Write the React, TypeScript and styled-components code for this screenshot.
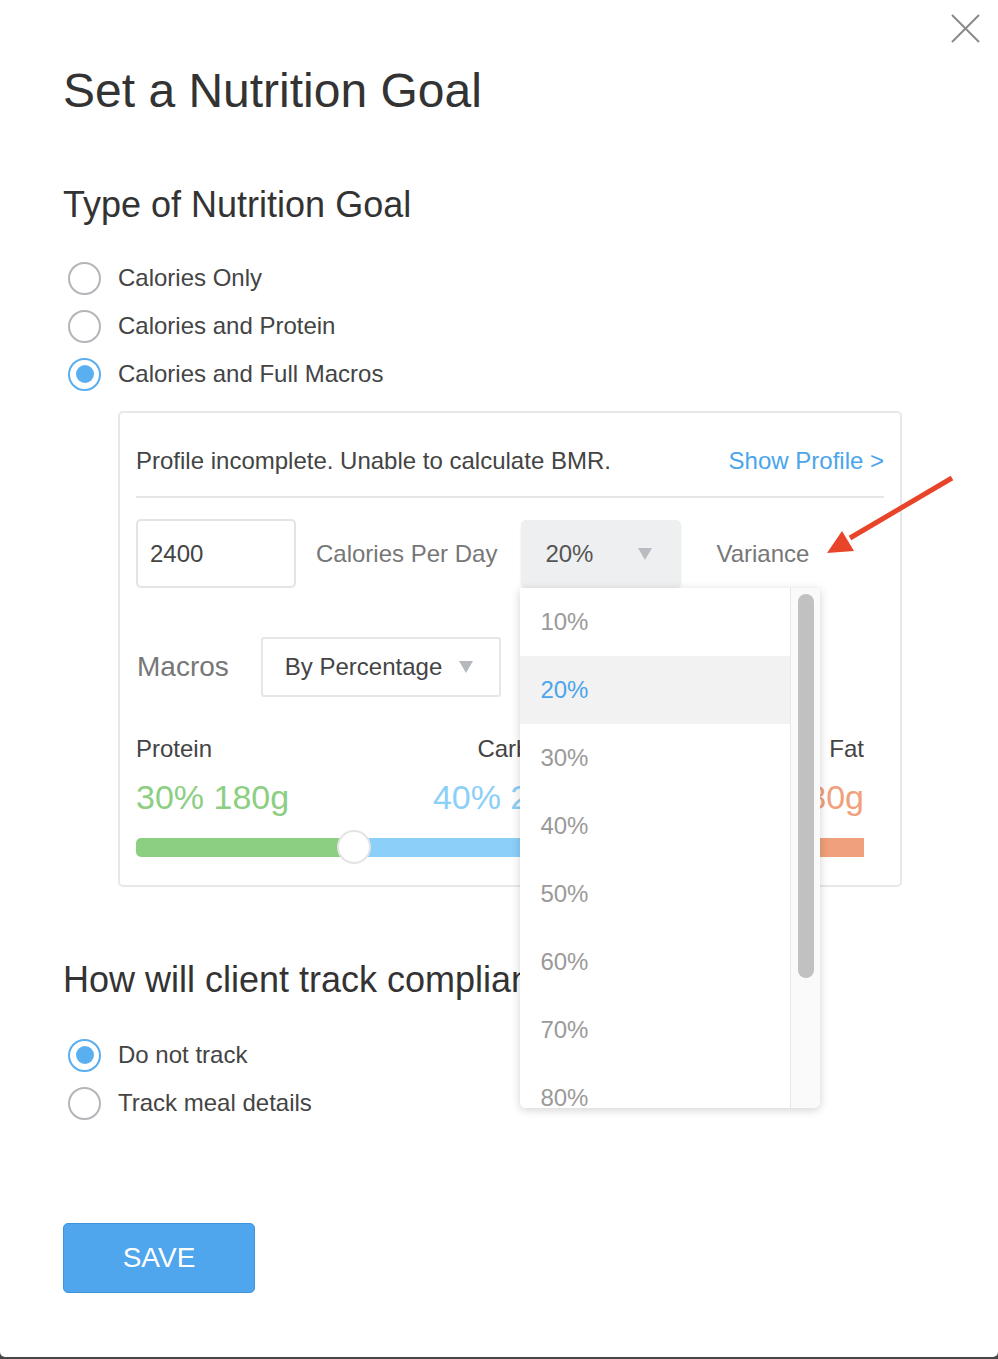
import React from "react";
import styled, { createGlobalStyle } from "styled-components";

const Global = createGlobalStyle`
  html, body { margin: 0; padding: 0; background: #474747; }
  * { box-sizing: border-box; }
  body { font-family: "Liberation Sans", Arial, sans-serif; }
`;

const Modal = styled.div`
  position: relative;
  width: 998px;
  height: 1357px;
  background: #fff;
  border-radius: 0 0 5px 5px;
  padding: 63px 0 0 63px;
  color: #333;
`;

const CloseButton = styled.button`
  position: absolute;
  top: 13px;
  right: 17px;
  width: 31px;
  height: 31px;
  padding: 0;
  border: 0;
  background: transparent;
  cursor: pointer;
`;

const Title = styled.h1`
  margin: 0;
  font-size: 48px;
  line-height: 56px;
  font-weight: 400;
  color: #333;
`;

const SectionTitle = styled.h2<{ $top: number }>`
  margin: ${(p) => p.$top}px 0 0;
  font-size: 36px;
  line-height: 44px;
  font-weight: 400;
  color: #333;
`;

const RadioGroup = styled.div<{ $top: number }>`
  display: flex;
  flex-direction: column;
  margin-top: ${(p) => p.$top}px;
`;

const RadioRow = styled.label`
  display: flex;
  align-items: center;
  height: 48px;
  padding-left: 5px;
  font-size: 24px;
  color: #444;
`;

const RadioCircle = styled.span<{ $checked?: boolean }>`
  width: 33px;
  height: 33px;
  border-radius: 50%;
  border: 2px solid ${(p) => (p.$checked ? "#5aaeef" : "#b4b5b9")};
  display: flex;
  align-items: center;
  justify-content: center;
  margin-right: 17px;
  flex-shrink: 0;
  &::after {
    content: "";
    display: ${(p) => (p.$checked ? "block" : "none")};
    width: 18px;
    height: 18px;
    border-radius: 50%;
    background: #59aff0;
  }
`;

const Panel = styled.div`
  margin: 13px 96px 0 55px;
  border: 2px solid #e8e8e8;
  border-radius: 5px;
  padding: 0 16px 21px;
`;

const PanelHeader = styled.div`
  display: flex;
  justify-content: space-between;
  align-items: center;
  padding: 34px 0 21px;
  border-bottom: 2px solid #e6e6e6;
  font-size: 24px;
  line-height: 28px;
  color: #444;
`;

const LinkText = styled.a`
  color: #4aa5ec;
  text-decoration: none;
`;

const FieldRow = styled.div<{ $top: number }>`
  display: flex;
  align-items: center;
  margin-top: ${(p) => p.$top}px;
`;

const NumberBox = styled.div`
  width: 160px;
  height: 69px;
  border: 2px solid #e4e4e4;
  border-radius: 5px;
  display: flex;
  align-items: center;
  padding-left: 12px;
  font-size: 24px;
  color: #444;
`;

const FieldLabel = styled.span<{ $left: number; $size?: number }>`
  margin-left: ${(p) => p.$left}px;
  font-size: ${(p) => p.$size ?? 24}px;
  color: #777;
`;

const Caret = styled.span<{ $color: string }>`
  width: 0;
  height: 0;
  border-left: 7px solid transparent;
  border-right: 7px solid transparent;
  border-top: 12px solid ${(p) => p.$color};
`;

const SelectWrap = styled.div<{ $left: number }>`
  position: relative;
  margin-left: ${(p) => p.$left}px;
`;

const VarianceSelect = styled.div`
  width: 160px;
  height: 67px;
  border-radius: 5px;
  background: #eeeff0;
  box-shadow: 0 2px 3px rgba(0, 0, 0, 0.08);
  display: flex;
  align-items: center;
  justify-content: space-between;
  padding: 0 29px 0 24px;
  font-size: 24px;
  color: #555;
`;

const Menu = styled.div`
  position: absolute;
  top: 68px;
  left: -1px;
  width: 300px;
  height: 520px;
  background: #fff;
  border-radius: 0 0 6px 6px;
  box-shadow: 0 2px 10px rgba(0, 0, 0, 0.18);
  display: flex;
  overflow: hidden;
  z-index: 5;
`;

const MenuList = styled.div`
  flex: 1;
  display: flex;
  flex-direction: column;
`;

const MenuItem = styled.div<{ $active?: boolean }>`
  height: 68px;
  flex-shrink: 0;
  display: flex;
  align-items: center;
  padding-left: 20px;
  font-size: 24px;
  color: ${(p) => (p.$active ? "#4aa5ec" : "#9a9a9a")};
  background: ${(p) => (p.$active ? "#f2f2f2" : "#fff")};
`;

const ScrollTrack = styled.div`
  width: 30px;
  border-left: 1px solid #e8e8e8;
  background: #fafafa;
  padding: 6px 0 0 7px;
`;

const ScrollThumb = styled.div`
  width: 16px;
  height: 384px;
  border-radius: 8px;
  background: #c1c1c1;
`;

const MacroSelect = styled.div`
  width: 240px;
  height: 60px;
  margin-left: 32px;
  border: 2px solid #e6e6e6;
  border-radius: 3px;
  display: flex;
  align-items: center;
  gap: 17px;
  padding-left: 22px;
  font-size: 24px;
  color: #444;
`;

const MacroGrid = styled.div`
  display: flex;
  justify-content: space-between;
  margin: 38px 20px 0 0;
`;

const MacroCol = styled.div<{ $align: string }>`
  display: flex;
  flex-direction: column;
  align-items: ${(p) => p.$align};
`;

const MacroLabel = styled.div`
  font-size: 24px;
  line-height: 28px;
  color: #444;
`;

const MacroValue = styled.div<{ $color: string }>`
  margin-top: 14px;
  font-size: 34px;
  line-height: 40px;
  color: ${(p) => p.$color};
`;

const Slider = styled.div`
  position: relative;
  height: 34px;
  margin: 13px 20px 0 0;
  display: flex;
  align-items: center;
`;

const Segment = styled.div<{ $color: string; $radius: string }>`
  height: 19px;
  background: ${(p) => p.$color};
  border-radius: ${(p) => p.$radius};
`;

const Knob = styled.div`
  position: absolute;
  top: 0;
  width: 34px;
  height: 34px;
  margin-left: -17px;
  border-radius: 50%;
  background: #fff;
  border: 2px solid #e4e4e4;
`;

const SaveButton = styled.button`
  margin-top: 96px;
  width: 192px;
  height: 70px;
  background: #4fa6ed;
  border: 1px solid #3f95dc;
  border-radius: 5px;
  color: #fff;
  font-family: "Liberation Sans", Arial, sans-serif;
  font-size: 28px;
`;

const Annotation = styled.svg`
  position: absolute;
  left: 820px;
  top: 470px;
  z-index: 6;
`;

const macros = [
  { name: "Protein", value: "30% 180g", color: "#8ccf82", pct: 30, align: "flex-start" },
  { name: "Carbs", value: "40% 240g", color: "#8ccff8", pct: 40, align: "center" },
  { name: "Fat", value: "30% 80g", color: "#f0a07a", pct: 30, align: "flex-end" },
];

const options = ["10%", "20%", "30%", "40%", "50%", "60%", "70%", "80%", "90%"];

export default function App() {
  return (
    <>
      <Global />
      <Modal>
        <CloseButton aria-label="Close">
          <svg width="31" height="31" viewBox="0 0 31 31">
            <path d="M2 2 L29 29 M29 2 L2 29" stroke="#8a8a8a" strokeWidth="2" fill="none" />
          </svg>
        </CloseButton>
        <Title>Set a Nutrition Goal</Title>
        <SectionTitle $top={64}>Type of Nutrition Goal</SectionTitle>
        <RadioGroup $top={27}>
          <RadioRow><RadioCircle />Calories Only</RadioRow>
          <RadioRow><RadioCircle />Calories and Protein</RadioRow>
          <RadioRow><RadioCircle $checked />Calories and Full Macros</RadioRow>
        </RadioGroup>
        <Panel>
          <PanelHeader>
            <span>Profile incomplete. Unable to calculate BMR.</span>
            <LinkText>Show Profile &gt;</LinkText>
          </PanelHeader>
          <FieldRow $top={21}>
            <NumberBox>2400</NumberBox>
            <FieldLabel $left={20}>Calories Per Day</FieldLabel>
            <SelectWrap $left={24}>
              <VarianceSelect>
                <span>20%</span>
                <Caret $color="#b8bbc0" />
              </VarianceSelect>
              <Menu>
                <MenuList>
                  {options.map((o) => (
                    <MenuItem key={o} $active={o === "20%"}>{o}</MenuItem>
                  ))}
                </MenuList>
                <ScrollTrack>
                  <ScrollThumb />
                </ScrollTrack>
              </Menu>
            </SelectWrap>
            <FieldLabel $left={35}>Variance</FieldLabel>
          </FieldRow>
          <FieldRow $top={49}>
            <FieldLabel $left={1} $size={28}>Macros</FieldLabel>
            <MacroSelect>
              <span>By Percentage</span>
              <Caret $color="#b5b8bd" />
            </MacroSelect>
          </FieldRow>
          <MacroGrid>
            {macros.map((m) => (
              <MacroCol key={m.name} $align={m.align}>
                <MacroLabel>{m.name}</MacroLabel>
                <MacroValue $color={m.color}>{m.value}</MacroValue>
              </MacroCol>
            ))}
          </MacroGrid>
          <Slider>
            {macros.map((m, i) => (
              <Segment
                key={m.name}
                $color={m.color}
                $radius={i === 0 ? "5px 0 0 5px" : "0"}
                style={{ width: `${m.pct}%` }}
              />
            ))}
            <Knob style={{ left: "30%" }} />
            <Knob style={{ left: "70%" }} />
          </Slider>
        </Panel>
        <SectionTitle $top={71}>How will client track compliance?</SectionTitle>
        <RadioGroup $top={29}>
          <RadioRow><RadioCircle $checked />Do not track</RadioRow>
          <RadioRow><RadioCircle />Track meal details</RadioRow>
        </RadioGroup>
        <SaveButton>SAVE</SaveButton>
        <Annotation width="140" height="90" viewBox="0 0 140 90">
          <line x1="132" y1="8" x2="30" y2="68" stroke="#e8442a" strokeWidth="5" />
          <polygon points="7,83 22,61 34,81" fill="#e8442a" />
        </Annotation>
      </Modal>
    </>
  );
}
